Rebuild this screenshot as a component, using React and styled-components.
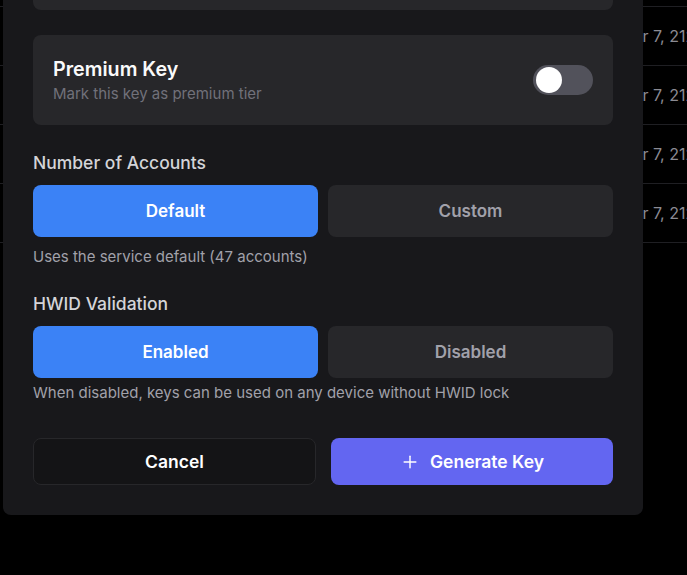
import React from "react";
import styled, { createGlobalStyle } from "styled-components";
import { Plus } from "lucide-react";

const Global = createGlobalStyle`
  html, body { margin: 0; padding: 0; background: #000; }
  body { font-family: Inter, "Noto Sans", sans-serif; overflow: hidden; }
  #root { height: 575px; position: relative; }
`;

const Page = styled.div`
  position: relative;
  height: 575px;
  overflow: hidden;
  background: #000;
`;

const Table = styled.div`
  display: flex;
  flex-direction: column;
  padding-top: 6px;
`;

const Row = styled.div`
  height: 58px;
  border-top: 1px solid #1f1f23;
  display: flex;
  align-items: center;
  padding-left: 619px;
  white-space: nowrap;
  &:last-child { border-bottom: 1px solid #1f1f23; }
`;

const Cell = styled.span`
  font-size: 16px;
  color: #8b8b93;
`;

const Modal = styled.div`
  position: absolute;
  left: 3px;
  bottom: 60px;
  width: 640px;
  box-sizing: border-box;
  background: #18181b;
  border-radius: 8px;
  padding: 0 30px 30px;
  display: flex;
  flex-direction: column;
`;

const Card = styled.div`
  background: #27272a;
  border-radius: 8px;
  padding: ${(p) => p.$pad || "20px"};
  display: flex;
  align-items: center;
  justify-content: space-between;
  height: ${(p) => p.$h || "auto"};
  box-sizing: border-box;
`;

const CardText = styled.div`
  display: flex;
  flex-direction: column;
  gap: 1px;
`;

const CardTitle = styled.div`
  font-size: 19.7px;
  font-weight: 600;
  color: #fafafa;
  line-height: 27px;
`;

const CardSub = styled.div`
  font-size: 15px;
  color: #71717a;
  line-height: 20px;
`;

const Switch = styled.div`
  width: 60px;
  height: 30px;
  border-radius: 15px;
  background: #52525b;
  padding: 2px 3px;
  box-sizing: border-box;
  display: flex;
  align-items: center;
`;

const Knob = styled.div`
  width: 26px;
  height: 26px;
  border-radius: 50%;
  background: #fff;
`;

const Section = styled.div`
  display: flex;
  flex-direction: column;
  margin-top: ${(p) => p.$mt}px;
`;

const Label = styled.div`
  font-size: 17.5px;
  font-weight: 500;
  color: #d4d4d8;
  line-height: 24px;
  margin-bottom: 10px;
`;

const Segments = styled.div`
  display: grid;
  grid-template-columns: 1fr 1fr;
  gap: 10px;
`;

const Segment = styled.button`
  height: 52px;
  border: none;
  border-radius: 8px;
  font-family: inherit;
  font-size: 17px;
  font-weight: 600;
  background: ${(p) => (p.$active ? "#3b82f6" : "#27272a")};
  color: ${(p) => (p.$active ? "#ffffff" : "#a1a1aa")};
`;

const Help = styled.div`
  font-size: 15px;
  color: #a1a1aa;
  line-height: 20px;
  margin-top: ${(p) => p.$mt}px;
`;

const Footer = styled.div`
  display: grid;
  grid-template-columns: 283px 282px;
  justify-content: space-between;
  margin-top: 35px;
`;

const FooterButton = styled.button`
  height: 47px;
  box-sizing: border-box;
  border-radius: 8px;
  font-family: inherit;
  font-size: 17.5px;
  font-weight: 600;
  color: #fff;
  display: flex;
  align-items: center;
  justify-content: center;
  gap: 10px;
  background: ${(p) => (p.$primary ? "#6366f1" : "#141416")};
  border: ${(p) => (p.$primary ? "none" : "1px solid #27272a")};
`;

export default function App() {
  const rows = [0, 1, 2, 3];
  return (
    <Page>
      <Global />
      <Table>
        {rows.map((r) => (
          <Row key={r}>
            <Cell>Mar 7, 2125</Cell>
          </Row>
        ))}
      </Table>
      <Modal>
        <Card $h="90px" />
        <Section $mt={25}>
          <Card $h="90px" $pad="0 20px">
            <CardText>
              <CardTitle>Premium Key</CardTitle>
              <CardSub>Mark this key as premium tier</CardSub>
            </CardText>
            <Switch>
              <Knob />
            </Switch>
          </Card>
        </Section>
        <Section $mt={26}>
          <Label>Number of Accounts</Label>
          <Segments>
            <Segment $active>Default</Segment>
            <Segment>Custom</Segment>
          </Segments>
          <Help $mt={10}>Uses the service default (47 accounts)</Help>
        </Section>
        <Section $mt={25}>
          <Label>HWID Validation</Label>
          <Segments>
            <Segment $active>Enabled</Segment>
            <Segment>Disabled</Segment>
          </Segments>
          <Help $mt={5}>When disabled, keys can be used on any device without HWID lock</Help>
        </Section>
        <Footer>
          <FooterButton>Cancel</FooterButton>
          <FooterButton $primary>
            <Plus size={20} strokeWidth={1.75} />
            Generate Key
          </FooterButton>
        </Footer>
      </Modal>
    </Page>
  );
}
